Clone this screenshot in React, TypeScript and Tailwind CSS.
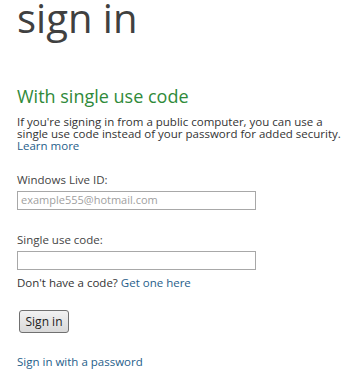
import React from "react";

export default function App() {
  return (
    <div className="w-[351px] h-[379px] bg-white pl-[17px] pr-[4px] font-['Open_Sans',sans-serif] overflow-hidden">
      <h1 className="text-[40px] leading-[36px] text-[#404040] font-normal">sign in</h1>
      <h2 className="mt-[50px] text-[18px] leading-[20px] text-[#2f8a3a] font-normal">With single use code</h2>
      <p className="mt-[10px] text-[11.5px] leading-[12px] text-[#333]">
        If you're signing in from a public computer, you can use a single use code instead of your password for added security.
        <br />
        <a className="text-[#1f5e8a]">Learn more</a>
      </p>
      <div className="mt-[22px] text-[11.5px] leading-[12px] text-[#444]">Windows Live ID:</div>
      <div className="mt-[5px] w-[239px] h-[19px] border border-[#a8a8a8] flex items-center pl-[3px] text-[11px] text-[#a0a0a0]">
        example555@hotmail.com
      </div>
      <div className="mt-[24px] text-[11.5px] leading-[12px] text-[#444]">Single use code:</div>
      <div className="mt-[5px] w-[239px] h-[19px] border border-[#a8a8a8]"></div>
      <div className="mt-[7px] text-[11.5px] leading-[12px] text-[#333]">
        Don't have a code? <a className="text-[#1f5e8a]">Get one here</a>
      </div>
      <button className="mt-[21px] ml-[2px] w-[50px] h-[23px] rounded-[3px] border border-[#707070] bg-gradient-to-b from-[#f2f2f2] to-[#d9d9d9] text-[12px] text-[#222] flex items-center justify-center">
        Sign in
      </button>
      <a className="block mt-[23px] text-[11.5px] leading-[12px] text-[#1f5e8a]">Sign in with a password</a>
    </div>
  );
}
